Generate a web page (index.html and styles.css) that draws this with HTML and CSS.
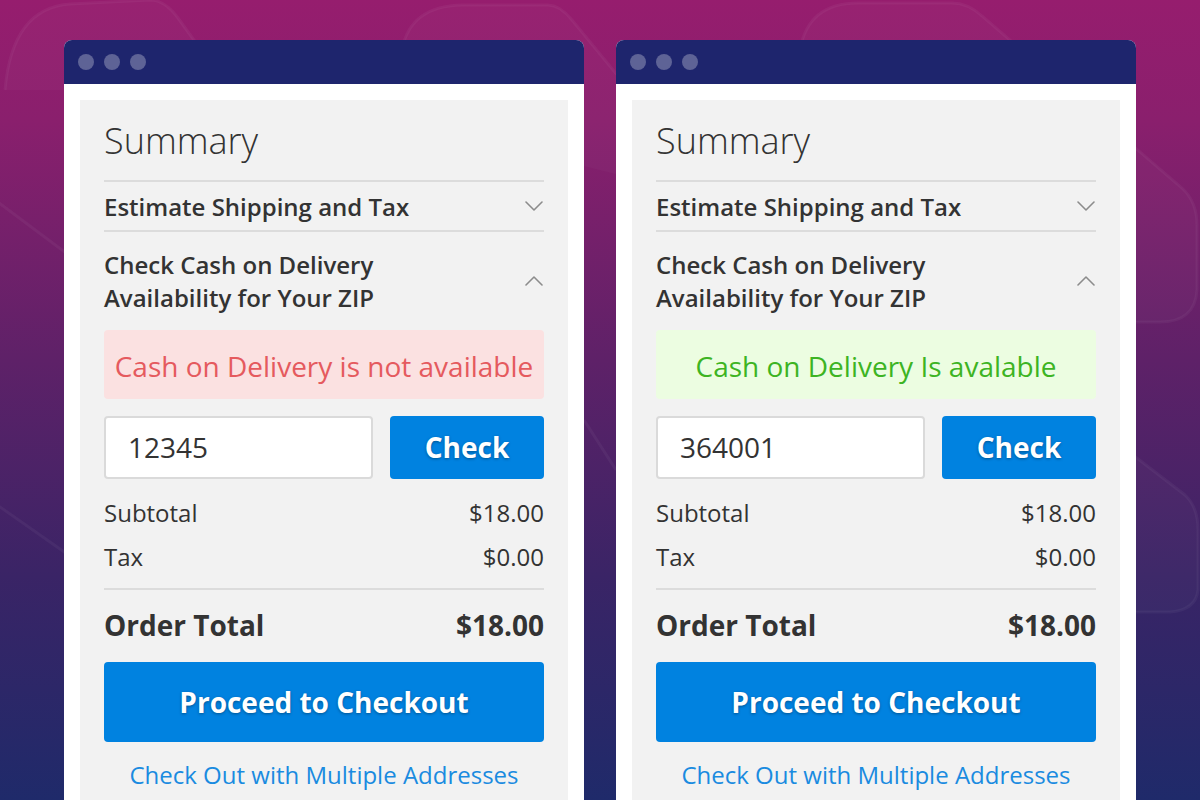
FILE: index.html
```html
<!DOCTYPE html>
<html lang="en">
<head>
<meta charset="utf-8">
<title>Cash on Delivery Check</title>
<link rel="stylesheet" href="styles.css">
</head>
<body>
<svg class="bg-shapes" width="1200" height="800" viewBox="0 0 1200 800" aria-hidden="true">
  <g fill="rgba(255,255,255,0.025)" stroke="rgba(255,255,255,0.045)" stroke-width="3">
    <path d="M 5 90 Q 12 8 70 4 L 150 0 Q 165 0 178 18 L 230 90"/>
    <path d="M 398 120 L 402 50 Q 410 6 462 5 L 548 5 Q 560 5 572 20 L 720 200"/>
    <path d="M 792 120 L 800 50 Q 808 3 858 3 L 952 3 Q 968 3 982 16 L 1182 188 Q 1197 202 1197 225 L 1197 290 Q 1195 322 1160 322 L 900 322"/>
    <path d="M 1060 420 L 1120 445 L 1185 495 Q 1198 507 1198 530 L 1198 590 Q 1196 610 1170 612 L 1100 612"/>
    <path d="M -10 196 L 70 256"/>
    <path d="M -10 500 L 70 556"/>
    <path d="M 584 420 L 616 470"/>
  </g>
</svg>
<main class="stage">
  <section class="window">
    <header class="titlebar">
      <span class="dot"></span><span class="dot"></span><span class="dot"></span>
    </header>
    <div class="window-body">
      <div class="summary">
        <h1 class="summary-title">Summary</h1>
        <div class="accordion-row">
          <span class="accordion-label">Estimate Shipping and Tax</span>
          <svg class="chevron" width="18" height="10" viewBox="0 0 18 10"><polyline points="1,1 9,9 17,1"/></svg>
        </div>
        <div class="accordion-row open">
          <span class="accordion-label">Check Cash on Delivery<br>Availability for Your ZIP</span>
          <svg class="chevron" width="18" height="10" viewBox="0 0 18 10"><polyline points="1,9 9,1 17,9"/></svg>
        </div>
        <div class="alert alert-error">Cash on Delivery is not available</div>
        <div class="zip-form">
          <div class="zip-input">12345</div>
          <button class="btn btn-check">Check</button>
        </div>
        <div class="totals">
          <div class="total-row"><span>Subtotal</span><span>$18.00</span></div>
          <div class="total-row"><span>Tax</span><span>$0.00</span></div>
        </div>
        <div class="grand-total"><span>Order Total</span><span>$18.00</span></div>
        <button class="btn btn-checkout">Proceed to Checkout</button>
        <a class="multi-link" href="#">Check Out with Multiple Addresses</a>
      </div>
    </div>
  </section>

  <section class="window">
    <header class="titlebar">
      <span class="dot"></span><span class="dot"></span><span class="dot"></span>
    </header>
    <div class="window-body">
      <div class="summary">
        <h1 class="summary-title">Summary</h1>
        <div class="accordion-row">
          <span class="accordion-label">Estimate Shipping and Tax</span>
          <svg class="chevron" width="18" height="10" viewBox="0 0 18 10"><polyline points="1,1 9,9 17,1"/></svg>
        </div>
        <div class="accordion-row open">
          <span class="accordion-label">Check Cash on Delivery<br>Availability for Your ZIP</span>
          <svg class="chevron" width="18" height="10" viewBox="0 0 18 10"><polyline points="1,9 9,1 17,9"/></svg>
        </div>
        <div class="alert alert-success">Cash on Delivery Is avalable</div>
        <div class="zip-form">
          <div class="zip-input">364001</div>
          <button class="btn btn-check">Check</button>
        </div>
        <div class="totals">
          <div class="total-row"><span>Subtotal</span><span>$18.00</span></div>
          <div class="total-row"><span>Tax</span><span>$0.00</span></div>
        </div>
        <div class="grand-total"><span>Order Total</span><span>$18.00</span></div>
        <button class="btn btn-checkout">Proceed to Checkout</button>
        <a class="multi-link" href="#">Check Out with Multiple Addresses</a>
      </div>
    </div>
  </section>
</main>
</body>
</html>
```

FILE: styles.css
```css
* {
  box-sizing: border-box;
}

html, body {
  margin: 0;
  padding: 0;
}

body {
  width: 1200px;
  height: 800px;
  overflow: hidden;
  position: relative;
  font-family: "Open Sans", "Noto Sans", sans-serif;
  color: #333333;
  background: linear-gradient(180deg, #961d6e 0%, #8a1f6d 15%, #5e2168 45%, #3a2466 72%, #1f2a6a 100%);
}

.bg-shapes {
  position: absolute;
  left: 0;
  top: 0;
  z-index: 0;
}

.stage {
  position: relative;
  z-index: 1;
  display: flex;
  gap: 32px;
  padding: 40px 0 0 64px;
}

.window {
  width: 520px;
  height: 800px;
  background: #ffffff;
  border-radius: 8px 8px 0 0;
  overflow: hidden;
  display: flex;
  flex-direction: column;
}

.titlebar {
  height: 44px;
  flex: none;
  background: #1e256d;
  display: flex;
  align-items: center;
  gap: 10px;
  padding-left: 14px;
}

.dot {
  width: 16px;
  height: 16px;
  border-radius: 50%;
  background: #5e6396;
}

.window-body {
  flex: 1;
  padding: 16px 16px 0;
}

.summary {
  height: 100%;
  background: #f2f2f2;
  padding: 19px 24px 0;
  display: flex;
  flex-direction: column;
}

.summary-title {
  margin: 0 0 17px;
  font-size: 36px;
  line-height: 44px;
  font-weight: 300;
  color: #333333;
}

.accordion-row {
  border-top: 2px solid #dcdcdc;
  display: flex;
  align-items: center;
  justify-content: space-between;
  height: 50px;
}

.accordion-row.open {
  height: auto;
  padding-top: 16px;
}

.accordion-label {
  font-size: 24px;
  line-height: 33px;
  font-weight: 600;
  color: #333333;
}

.accordion-row:first-of-type .accordion-label {
  line-height: 48px;
  padding-top: 1px;
}

.chevron {
  flex: none;
  margin-right: 1px;
}

.chevron polyline {
  fill: none;
  stroke: #8c8c8c;
  stroke-width: 1.6;
  stroke-linecap: round;
  stroke-linejoin: round;
}

.alert {
  margin-top: 16px;
  height: 69px;
  padding-top: 4px;
  line-height: 65px;
  text-align: center;
  font-size: 28px;
  border-radius: 4px;
  white-space: nowrap;
}

.alert-error {
  background: #fbe1e1;
  color: #e55a5e;
}

.alert-success {
  background: #ecfde1;
  color: #3db423;
}

.zip-form {
  margin-top: 17px;
  display: flex;
  gap: 17px;
  height: 63px;
}

.zip-input {
  flex: 1;
  background: #ffffff;
  border: 2px solid #dadada;
  border-radius: 4px;
  padding: 0 22px;
  font-size: 28px;
  line-height: 59px;
  color: #333333;
}

.btn {
  border: none;
  margin: 0;
  background: #0082e0;
  color: #ffffff;
  font-family: "Open Sans", "Noto Sans", sans-serif;
  font-weight: 700;
  font-size: 28px;
  border-radius: 4px;
  text-shadow: 0 1px 3px rgba(0, 0, 0, 0.35);
  cursor: pointer;
  padding: 0;
}

.btn-check {
  width: 154px;
  flex: none;
  line-height: 63px;
}

.totals {
  margin-top: 12px;
  border-bottom: 2px solid #dcdcdc;
  padding-bottom: 9px;
}

.total-row {
  display: flex;
  justify-content: space-between;
  font-size: 24px;
  line-height: 44px;
  color: #333333;
}

.grand-total {
  margin-top: 11px;
  display: flex;
  justify-content: space-between;
  font-size: 28px;
  line-height: 48px;
  font-weight: 700;
  color: #333333;
}

.btn-checkout {
  margin-top: 13px;
  height: 80px;
  line-height: 80px;
  width: 100%;
}

.multi-link {
  margin-top: 17px;
  text-align: center;
  font-size: 24px;
  line-height: 32px;
  color: #1a8be0;
  text-decoration: none;
}
```
